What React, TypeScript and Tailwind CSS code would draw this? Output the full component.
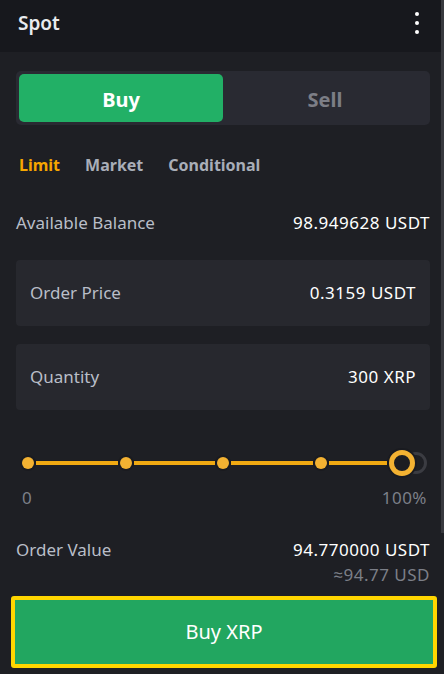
import React from "react";

const font = { fontFamily: '"Noto Sans", "Open Sans", sans-serif' };

const Dot = () => (
  <span className="h-[16px] w-[16px] rounded-full bg-[#1a1b20] flex items-center justify-center shrink-0">
    <span className="h-[12px] w-[12px] rounded-full bg-[#f3b232]" />
  </span>
);

export default function App() {
  return (
    <div className="w-[444px] h-[674px] bg-[#1e1f24] flex overflow-hidden" style={font}>
      <div className="flex-1 flex flex-col">
        {/* Header */}
        <div className="h-[52px] bg-[#17181d] flex items-center justify-between pl-[18px] pr-[22px] pb-[6px] shrink-0">
          <span className="text-[19px] font-semibold text-[#e9ebef] leading-none">Spot</span>
          <span className="flex flex-col gap-[5px]">
            <span className="h-[4px] w-[4px] rounded-full bg-white" />
            <span className="h-[4px] w-[4px] rounded-full bg-white" />
            <span className="h-[4px] w-[4px] rounded-full bg-white" />
          </span>
        </div>

        <div className="flex flex-col pl-[16px] pr-[11px] pt-[19px]">
          {/* Buy / Sell */}
          <div className="h-[54px] rounded-[5px] bg-[#292a32] p-[3px] flex">
            <div className="w-[204px] rounded-[5px] bg-[#22b066] flex items-center justify-center text-[20px] font-bold text-white pt-[3px]">
              Buy
            </div>
            <div className="flex-1 flex items-center justify-center text-[20px] font-bold text-[#7c7e86] pt-[3px]">
              Sell
            </div>
          </div>

          {/* Tabs */}
          <div className="flex items-center gap-[25px] pl-[3px] mt-[29px] text-[16px] font-bold leading-[22px]">
            <span className="text-[#f7a600]">Limit</span>
            <span className="text-[#a9aeb8]">Market</span>
            <span className="text-[#a9aeb8]">Conditional</span>
          </div>

          {/* Available balance */}
          <div className="flex items-center justify-between mt-[36px] text-[17px] leading-[22px]">
            <span className="text-[#b9bec8]">Available Balance</span>
            <span className="text-white tracking-[0.5px]">98.949628 USDT</span>
          </div>

          {/* Order price */}
          <div className="h-[66px] mt-[26px] rounded-[4px] bg-[#27282e] flex items-center justify-between px-[14px] text-[17px] leading-[22px]">
            <span className="text-[#b9bec8]">Order Price</span>
            <span className="text-white tracking-[0.5px]">0.3159 USDT</span>
          </div>

          {/* Quantity */}
          <div className="h-[66px] mt-[18px] rounded-[4px] bg-[#27282e] flex items-center justify-between px-[14px] text-[17px] leading-[22px]">
            <span className="text-[#b9bec8]">Quantity</span>
            <span className="text-white tracking-[0.5px]">300 XRP</span>
          </div>

          {/* Slider */}
          <div className="mt-[38px] flex items-center pl-[4px] h-[30px]">
            <Dot />
            <span className="h-[4px] w-[82px] bg-[#f0a912]" />
            <Dot />
            <span className="h-[4px] w-[81px] bg-[#f0a912]" />
            <Dot />
            <span className="h-[4px] w-[82px] bg-[#f0a912]" />
            <Dot />
            <span className="h-[4px] w-[58px] bg-[#f0a912]" />
            <span className="relative h-[30px] w-[30px] shrink-0 flex items-center justify-center">
              <span className="absolute left-[18px] h-[22px] w-[22px] rounded-full border-[3px] border-[#3b3c42]" />
              <span className="relative h-[30px] w-[30px] rounded-full bg-[#1a1b20] flex items-center justify-center">
                <span className="h-[26px] w-[26px] rounded-full border-[5px] border-[#f3b232] bg-[#1c1d22]" />
              </span>
            </span>
          </div>

          <div className="flex justify-between mt-[9px] pl-[6px] pr-[3px] text-[17px] leading-[22px] text-[#7c7f88]">
            <span>0</span>
            <span className="tracking-[0.5px]">100%</span>
          </div>

          {/* Order value */}
          <div className="flex items-center justify-between mt-[30px] text-[17px] leading-[22px]">
            <span className="text-[#b9bec8]">Order Value</span>
            <span className="text-white tracking-[0.5px]">94.770000 USDT</span>
          </div>
          <div className="flex justify-end text-[17px] text-[#7c7f88] leading-[22px] mt-[3px] tracking-[0.5px]">≈94.77 USD</div>
        </div>

        {/* Buy XRP button */}
        <div className="ml-[11px] mr-[4px] mt-[10px] h-[72px] rounded-[3px] border-[4px] border-[#ffd600] bg-[#22a660] flex items-center justify-center text-[20px] text-white">
          Buy XRP
        </div>
      </div>

      {/* Scrollbar */}
      <div className="w-[3px] flex flex-col shrink-0">
        <div className="h-[533px] bg-[#38393e]" />
        <div className="flex-1 bg-[#1e1f24]" />
      </div>
    </div>
  );
}
